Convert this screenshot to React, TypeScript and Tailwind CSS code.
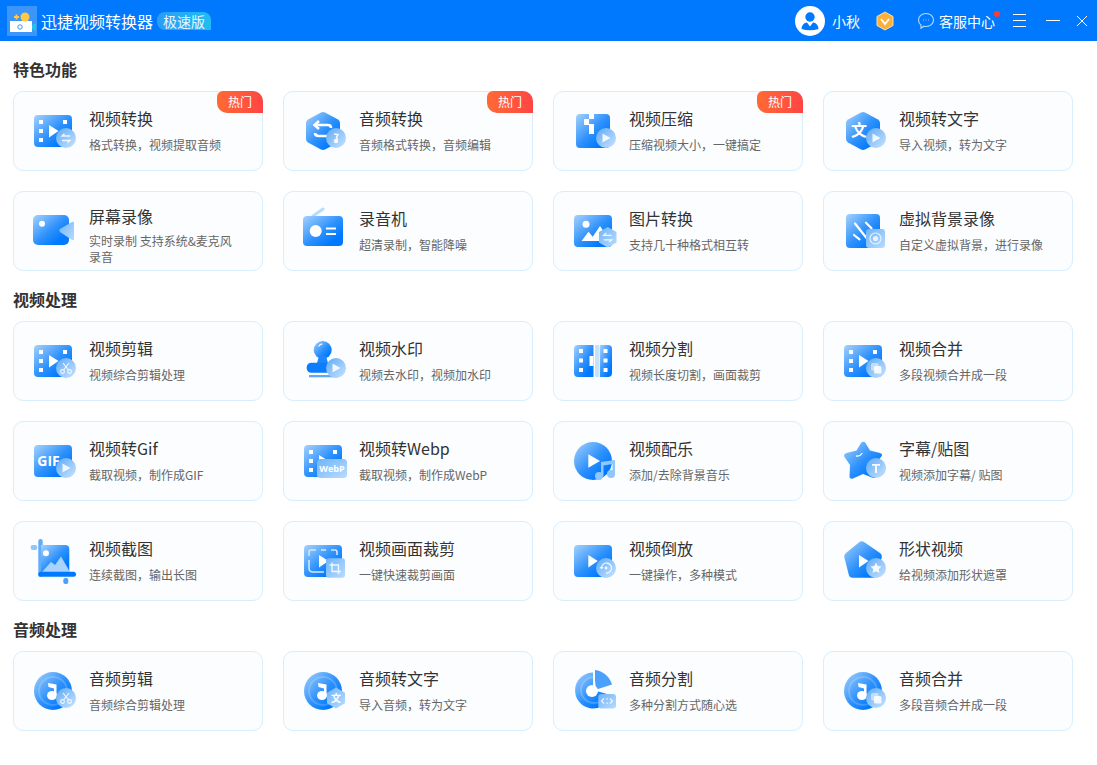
import React from "react";

const Defs = () => (
  <defs>
    <linearGradient id="m" x1="0" y1="0" x2="1" y2="1">
      <stop offset="0" stopColor="#a6d2fd" />
      <stop offset="0.5" stopColor="#2f92fc" />
      <stop offset="0.8" stopColor="#0079fe" />
      <stop offset="1" stopColor="#0079fe" />
    </linearGradient>
    <linearGradient id="b" x1="0" y1="0" x2="1" y2="1">
      <stop offset="0" stopColor="#5fa9f6" />
      <stop offset="1" stopColor="#c8e4ff" />
    </linearGradient>
    <linearGradient id="s" x1="0" y1="0" x2="1" y2="1">
      <stop offset="0" stopColor="#6fb4f8" />
      <stop offset="1" stopColor="#b9dcfe" />
    </linearGradient>
  </defs>
);

const Svg = ({ children }: { children: React.ReactNode }) => (
  <svg width="60" height="60" viewBox="0 0 60 60" className="shrink-0">
    <Defs />
    {children}
  </svg>
);

const Rect = () => <rect x="5" y="14" width="38" height="32" rx="4" fill="url(#m)" />;

const Holes = ({ right = true }: { right?: boolean }) => (
  <g fill="#fff">
    <rect x="10" y="19" width="4" height="4" />
    <rect x="10" y="28" width="4" height="4" />
    <rect x="10" y="37" width="4" height="4" />
    {right && <rect x="34" y="19" width="4" height="4" />}
  </g>
);

const Tri = ({ x = 20 }: { x?: number }) => (
  <path d={`M${x} 24 L${x + 9.5} 30 L${x} 36.5 Z`} fill="#fff" />
);

const Circle = ({ children }: { children?: React.ReactNode }) => (
  <g>
    <circle cx="37" cy="37" r="10" fill="url(#b)" />
    {children}
  </g>
);

const SquareBadge = ({ x = 27, y = 27.5, w = 19, h = 19.5, children }: any) => (
  <g>
    <rect x={x} y={y} width={w} height={h} rx="3" fill="url(#s)" />
    {children}
  </g>
);

const PlayG = () => <path d="M33.5 32.5 L41.5 37 L33.5 41.5 Z" fill="#fff" opacity="0.85" />;
const SwapG = () => (
  <g fill="none" stroke="#fff" strokeWidth="1.3" opacity="0.85">
    <path d="M33 35 H41 M35.5 32.8 L33 35 L35.5 35" />
    <path d="M41 39.5 H33 M38.5 41.7 L41 39.5 L38.5 39.5" />
  </g>
);
const NoteG = () => (
  <g fill="none" stroke="#fff" strokeWidth="1.5" opacity="0.9">
    <path d="M35 33 L39 33.5 L37.5 36 L38.5 39" />
    <circle cx="37" cy="40" r="1.5" fill="#fff" />
  </g>
);
const ScissorG = () => (
  <g fill="none" stroke="#fff" strokeWidth="1.1" opacity="0.9">
    <circle cx="33.5" cy="40.5" r="1.9" />
    <circle cx="40.5" cy="40.5" r="1.9" />
    <path d="M34.5 39 L40 32 M39.5 39 L34 32" />
  </g>
);
const CopyG = () => (
  <g>
    <rect x="32" y="32" width="7.5" height="7.5" rx="1.5" fill="#fff" opacity="0.5" />
    <rect x="35" y="35" width="7.5" height="7.5" rx="1.5" fill="#fff" opacity="0.85" />
  </g>
);

const Disc = () => (
  <g>
    <circle cx="24" cy="30" r="19" fill="url(#m)" />
    <circle cx="24" cy="30" r="14" fill="none" stroke="#fff" strokeOpacity="0.18" strokeWidth="2" />
  </g>
);
const BigNote = () => (
  <g>
    <ellipse cx="23" cy="34.5" rx="5" ry="4.6" fill="#fff" />
    <path d="M19 22 L27.5 23.5 V34 L25 35 V27.5 L19.5 26 Z" fill="#fff" />
  </g>
);

const Hex = () => (
  <path
    d="M22 11.5 Q24 10.6 26 11.5 L39 18.5 Q41 19.7 41 22 V38 Q41 40.3 39 41.5 L26 48.5 Q24 49.4 22 48.5 L9 41.5 Q7 40.3 7 38 V22 Q7 19.7 9 18.5 Z"
    fill="url(#m)"
  />
);

const icons: Record<string, React.ReactNode> = {
  convert: (
    <Svg>
      <Rect />
      <Holes />
      <Tri />
      <Circle>
        <SwapG />
      </Circle>
    </Svg>
  ),
  audio: (
    <Svg>
      <Hex />
      <g fill="none" stroke="#fff" strokeWidth="2.6">
        <path d="M16 24 H29 Q32 24 32 27" />
        <path d="M20 20 L15.5 24 L20 28" />
        <path d="M16 32 Q16 35 20 35 H30" />
      </g>
      <Circle>
        <NoteG />
      </Circle>
    </Svg>
  ),
  compress: (
    <Svg>
      <rect x="7" y="13" width="34" height="34" rx="4" fill="url(#m)" />
      <g fill="#fff">
        <rect x="20" y="13" width="5" height="5" />
        <rect x="15" y="18" width="5" height="5" />
        <rect x="20" y="23" width="5" height="5" />
        <rect x="15" y="23" width="5" height="1" />
        <rect x="20" y="28" width="5" height="5" />
      </g>
      <Circle>
        <PlayG />
      </Circle>
    </Svg>
  ),
  text: (
    <Svg>
      <Hex />
      <text x="20" y="35" textAnchor="middle" fontSize="16" fontWeight="700" fill="#fff" fontFamily="'Noto Sans CJK SC', sans-serif">
        文
      </text>
      <Circle>
        <PlayG />
      </Circle>
    </Svg>
  ),
  screen: (
    <Svg>
      <rect x="4" y="14" width="36" height="30" rx="5" fill="url(#m)" />
      <circle cx="13" cy="22.7" r="3" fill="#fff" />
      <path d="M31 28 L43 21 Q45 20 45 22 V38 Q45 40 43 39 L31 31 Q29.5 29.5 31 28 Z" fill="url(#s)" />
    </Svg>
  ),
  radio: (
    <Svg>
      <path d="M14 15 L24 8" stroke="#b9dcfe" strokeWidth="3" strokeLinecap="round" />
      <rect x="4" y="15" width="40" height="30" rx="4" fill="url(#m)" />
      <circle cx="16.7" cy="30" r="6" fill="#fff" />
      <rect x="27" y="26.5" width="10" height="2" fill="#fff" />
      <rect x="27" y="32" width="10" height="2" fill="#fff" />
    </Svg>
  ),
  image: (
    <Svg>
      <Rect />
      <circle cx="17" cy="23.3" r="3.5" fill="#fff" />
      <path d="M12.5 40 L19.5 30.7 L23.7 35.7 L31 25 L41 40 Z" fill="#fff" />
      <path d="M38.7 26 L47.5 31 V41.5 L38.7 46.5 L30 41.5 V31 Z" fill="url(#s)" />
      <g fill="none" stroke="#fff" strokeWidth="1.3" opacity="0.85" transform="translate(1.7 -0.7)">
        <path d="M33 35 H41 M35.5 32.8 L33 35 L35.5 35" />
        <path d="M41 39.5 H33 M38.5 41.7 L41 39.5 L38.5 39.5" />
      </g>
    </Svg>
  ),
  virtual: (
    <Svg>
      <rect x="7" y="13" width="34" height="34" rx="4" fill="url(#m)" />
      <g stroke="#fff" strokeWidth="2.2" strokeLinecap="round">
        <path d="M16 22.5 L27.5 37" />
        <path d="M27 21.7 L32.5 27.3" />
        <path d="M15 34 L20.5 38.3" />
      </g>
      <SquareBadge x={27} y={28} w={19} h={19}>
        <circle cx="36.5" cy="37.5" r="5.5" fill="none" stroke="#e6f3ff" strokeWidth="1.2" />
        <circle cx="36.5" cy="37.5" r="2.6" fill="#e6f3ff" />
      </SquareBadge>
    </Svg>
  ),
  edit: (
    <Svg>
      <Rect />
      <Holes />
      <Tri />
      <Circle>
        <ScissorG />
      </Circle>
    </Svg>
  ),
  stamp: (
    <Svg>
      <circle cx="23.7" cy="19" r="9" fill="url(#m)" />
      <path d="M20 25 H27 L29 32 H18 Z" fill="#1c86fd" />
      <rect x="7.7" y="31.7" width="31.6" height="10" rx="4.5" fill="#0a7efe" />
      <rect x="10" y="44" width="29" height="2.3" fill="#5daafb" />
      <path d="M20 15 Q21 13 23 13" stroke="#fff" strokeWidth="1.2" fill="none" strokeLinecap="round" />
      <Circle>
        <PlayG />
      </Circle>
    </Svg>
  ),
  split: (
    <Svg>
      <path d="M9 14 H24.5 V46 H9 Q5 46 5 42 V18 Q5 14 9 14 Z" fill="url(#m)" />
      <path d="M31 14 H39 Q43 14 43 18 V42 Q43 46 39 46 H31 Z" fill="url(#m)" />
      <rect x="26" y="14" width="4.5" height="32" rx="1" fill="#c4e1fe" />
      <rect x="20.5" y="25" width="4" height="10" fill="#fff" />
      <g fill="#fff">
        <rect x="10" y="18" width="4" height="4" />
        <rect x="10" y="27.5" width="4" height="4" />
        <rect x="10" y="37" width="4" height="4" />
        <rect x="34.5" y="18" width="4" height="4" />
        <rect x="34.5" y="27.5" width="4" height="4" />
        <rect x="34.5" y="37" width="4" height="4" />
      </g>
    </Svg>
  ),
  merge: (
    <Svg>
      <Rect />
      <Holes />
      <Tri />
      <Circle>
        <CopyG />
      </Circle>
    </Svg>
  ),
  gif: (
    <Svg>
      <Rect />
      <text x="19.5" y="34.5" textAnchor="middle" fontSize="14" fontWeight="700" fill="#fff" fontFamily="'Open Sans', sans-serif">
        GIF
      </text>
      <Circle>
        <PlayG />
      </Circle>
    </Svg>
  ),
  webp: (
    <Svg>
      <Rect />
      <Holes />
      <path d="M20 24 L29.5 30 L20 36.5 Z" fill="#fff" />
      <rect x="18" y="28" width="30" height="19" rx="3.5" fill="url(#s)" />
      <text x="33" y="41" textAnchor="middle" fontSize="9" fontWeight="700" fill="#fff" fontFamily="'Open Sans', sans-serif">
        WebP
      </text>
    </Svg>
  ),
  music: (
    <Svg>
      <circle cx="24" cy="30" r="19" fill="url(#m)" />
      <path d="M19.3 23.3 L31 30 L19.3 36.7 Z" fill="#fff" />
      <g fill="#8fc6fb">
        <path d="M32 31 L46 29 V43 H43.5 V33 L34.5 34.5 V45 H32 Z" />
        <circle cx="30" cy="45" r="4" />
        <circle cx="42" cy="43" r="4" />
      </g>
    </Svg>
  ),
  star: (
    <Svg>
      <path
        d="M22 12 Q24.5 9.5 26.5 12 L31 19.5 L41 22 Q44.5 23 42 26 L36 33.5 L37 44 Q37 48 33 46.5 L24 43 L14 47.5 Q10.5 48.5 10.5 45 L11 34 L5.5 26 Q4 23 7.5 22 L17.5 19.5 Z"
        fill="url(#m)"
      />
      <path d="M17.5 25 Q21 25.5 23 22.5" stroke="#fff" strokeWidth="1.3" fill="none" strokeLinecap="round" />
      <Circle>
        <path d="M33 33 H41 V34.8 H38 V42 H36 V34.8 H33 Z" fill="#fff" opacity="0.9" />
      </Circle>
    </Svg>
  ),
  shot: (
    <Svg>
      <rect x="9.3" y="8" width="4.4" height="38" rx="2" fill="#61acfb" />
      <path d="M12 14 H36 Q40.3 14 40.3 18 V41 H12 Z" fill="url(#m)" />
      <path d="M13 41 L22 31 L26 34 L32 25.5 L41 41 Z" fill="#a9d3fd" />
      <circle cx="17" cy="22.3" r="3" fill="#fff" />
      <rect x="9.3" y="40.7" width="37.7" height="5" rx="2.5" fill="#0079fe" />
      <rect x="1.7" y="14" width="6.6" height="5" rx="2" fill="#8fc6fb" />
      <rect x="34.3" y="47" width="5" height="6" rx="2" fill="#4aa0fb" />
    </Svg>
  ),
  crop: (
    <Svg>
      <Rect />
      <g fill="none" stroke="#cfe7ff" strokeWidth="1.6">
        <path d="M10 25 V21 Q10 19 12 19 H17" />
        <path d="M22 19 H29" strokeDasharray="5 2" />
        <path d="M32 19 H36 Q38 19 38 21 V24" />
        <path d="M10 29 V37 Q10 41 14 41 H25" />
      </g>
      <Tri x={20} />
      <SquareBadge x={27} y={27.3} w={19} h={19.4}>
        <path d="M33 31.5 V40.5 H42 M30.5 34 H39.5 V43" fill="none" stroke="#fff" strokeWidth="1.4" opacity="0.85" />
      </SquareBadge>
    </Svg>
  ),
  reverse: (
    <Svg>
      <Rect />
      <Tri x={19.3} />
      <Circle>
        <path d="M32.5 36.5 A5 5 0 1 1 37 42" fill="none" stroke="#fff" strokeWidth="1.2" opacity="0.9" />
        <path d="M30.5 36 H34.5 L32.5 38.5 Z" fill="#fff" opacity="0.9" />
        <circle cx="37" cy="37" r="1.4" fill="#fff" opacity="0.9" />
      </Circle>
    </Svg>
  ),
  shape: (
    <Svg>
      <path
        d="M20.5 11 Q22.7 9.3 25 11 L41 22 Q43.5 23.8 42.6 27 L37.6 43.5 Q36.6 46.7 33.5 46.7 L13.5 46.7 Q10.5 46.7 9.7 43.5 L5.5 27 Q4.7 23.8 7 22 Z"
        fill="url(#m)"
      />
      <Tri />
      <Circle>
        <path d="M37 31.5 L38.7 35.1 L42.5 35.6 L39.7 38.2 L40.4 42 L37 40.2 L33.6 42 L34.3 38.2 L31.5 35.6 L35.3 35.1 Z" fill="#fff" opacity="0.9" />
      </Circle>
    </Svg>
  ),
  aedit: (
    <Svg>
      <Disc />
      <BigNote />
      <Circle>
        <ScissorG />
      </Circle>
    </Svg>
  ),
  atext: (
    <Svg>
      <Disc />
      <BigNote />
      <path d="M37 26.5 L46 31.7 V42.3 L37 47.5 L28 42.3 V31.7 Z" fill="url(#s)" />
      <text x="37" y="41" textAnchor="middle" fontSize="10" fontWeight="700" fill="#fff" fontFamily="'Noto Sans CJK SC', sans-serif">
        文
      </text>
    </Svg>
  ),
  asplit: (
    <Svg>
      <path d="M24 11.5 A18 18 0 1 0 41.5 34 L24 29 Z" fill="url(#m)" />
      <circle cx="25" cy="29" r="13" fill="none" stroke="#fff" strokeOpacity="0.2" strokeWidth="2" />
      <path d="M26 9 A20 20 0 0 1 43 23.5 L26 29 Z" fill="#4ba0fb" />
      <path d="M24 29 L26 20 L27 29 Z" fill="#fff" />
      <circle cx="23" cy="30" r="6" fill="#fff" />
      <SquareBadge x={29.3} y={33} w={17.7} h={14.5}>
        <path d="M35 37.5 L32.5 40 L35 42.5 M41 37.5 L43.5 40 L41 42.5" fill="none" stroke="#fff" strokeWidth="1.2" opacity="0.85" />
        <path d="M38 37 V38.5 M38 41.5 V43" stroke="#fff" strokeWidth="1.2" opacity="0.85" />
      </SquareBadge>
    </Svg>
  ),
  amerge: (
    <Svg>
      <Disc />
      <BigNote />
      <Circle>
        <CopyG />
      </Circle>
    </Svg>
  ),
};

type Item = { i: string; t: string; d: string; hot?: boolean; wrap?: boolean };

const sections: { title: string; items: Item[] }[] = [
  {
    title: "特色功能",
    items: [
      { i: "convert", t: "视频转换", d: "格式转换，视频提取音频", hot: true },
      { i: "audio", t: "音频转换", d: "音频格式转换，音频编辑", hot: true },
      { i: "compress", t: "视频压缩", d: "压缩视频大小，一键搞定", hot: true },
      { i: "text", t: "视频转文字", d: "导入视频，转为文字" },
      { i: "screen", t: "屏幕录像", d: "实时录制 支持系统&麦克风录音", wrap: true },
      { i: "radio", t: "录音机", d: "超清录制，智能降噪" },
      { i: "image", t: "图片转换", d: "支持几十种格式相互转" },
      { i: "virtual", t: "虚拟背景录像", d: "自定义虚拟背景，进行录像" },
    ],
  },
  {
    title: "视频处理",
    items: [
      { i: "edit", t: "视频剪辑", d: "视频综合剪辑处理" },
      { i: "stamp", t: "视频水印", d: "视频去水印，视频加水印" },
      { i: "split", t: "视频分割", d: "视频长度切割，画面裁剪" },
      { i: "merge", t: "视频合并", d: "多段视频合并成一段" },
      { i: "gif", t: "视频转Gif", d: "截取视频，制作成GIF" },
      { i: "webp", t: "视频转Webp", d: "截取视频，制作成WebP" },
      { i: "music", t: "视频配乐", d: "添加/去除背景音乐" },
      { i: "star", t: "字幕/贴图", d: "视频添加字幕/ 贴图" },
      { i: "shot", t: "视频截图", d: "连续截图，输出长图" },
      { i: "crop", t: "视频画面裁剪", d: "一键快速裁剪画面" },
      { i: "reverse", t: "视频倒放", d: "一键操作，多种模式" },
      { i: "shape", t: "形状视频", d: "给视频添加形状遮罩" },
    ],
  },
  {
    title: "音频处理",
    items: [
      { i: "aedit", t: "音频剪辑", d: "音频综合剪辑处理" },
      { i: "atext", t: "音频转文字", d: "导入音频，转为文字" },
      { i: "asplit", t: "音频分割", d: "多种分割方式随心选" },
      { i: "amerge", t: "音频合并", d: "多段音频合并成一段" },
    ],
  },
];

const Card = ({ item }: { item: Item }) => (
  <div className="relative box-border flex h-20 w-[250px] items-center rounded-[10px] border border-[#d8eefd] bg-[#fbfdff] pl-[15px]">
    {icons[item.i]}
    <div className={`min-w-0 flex-1 self-start pr-6 ${item.wrap ? "pt-3" : "pt-[14px]"}`}>
      <div className="text-[16px] leading-6 text-[#333]">{item.t}</div>
      <div className={`text-[12px] leading-4 text-[#666] ${item.wrap ? "mt-[5px]" : "mt-[7px]"}`}>{item.d}</div>
    </div>
    {item.hot && (
      <div className="absolute -right-px -top-px flex h-[22px] w-[46px] items-center justify-center rounded-tl-[6px] rounded-tr-[10px] rounded-bl-[10px] bg-gradient-to-r from-[#ff6a33] to-[#ff4444] text-[12px] text-white">
        热门
      </div>
    )}
  </div>
);

export default function App() {
  return (
    <div
      className="h-[765px] w-[1097px] overflow-hidden bg-white"
      style={{ fontFamily: "'Noto Sans CJK SC', 'Liberation Sans', sans-serif" }}
    >
      <header className="flex h-[41px] items-center bg-[#0079fe] text-white">
        <svg width="30" height="30" viewBox="0 0 30 30" className="ml-[7px] shrink-0">
          <rect width="30" height="30" fill="#3c95f8" />
          <path d="M3 15 H25 V26 H3 Z" fill="#fff" />
          <path d="M25 19 L29 17 V25 L25 23 Z" fill="#21c5e0" />
          <circle cx="18" cy="11" r="4.5" fill="#ffc847" />
          <path d="M7 11 H12 M9.5 8.5 V13.5" stroke="#ffc847" strokeWidth="1.8" />
          <circle cx="13" cy="21" r="2.2" fill="none" stroke="#3c95f8" strokeWidth="1" />
        </svg>
        <span className="ml-1 text-[16px] leading-6">迅捷视频转换器</span>
        <span className="ml-1 flex h-[18px] w-[54px] items-center justify-center rounded-l-[8px] rounded-tr-[8px] bg-gradient-to-r from-[#2a9cf6] to-[#1fbdf0] text-[14px] leading-none text-[#e8f6ff]">
          极速版
        </span>
        <div className="ml-auto flex items-center">
          <svg width="30" height="30" viewBox="0 0 30 30" className="shrink-0">
            <circle cx="15" cy="15" r="15" fill="#fff" />
            <circle cx="15" cy="11" r="4.7" fill="#0079fe" />
            <path d="M6.5 23 Q7 17 12 16.5 L15 20.5 L18 16.5 Q23 17 23.5 23 Q15 25.5 6.5 23 Z" fill="#0079fe" />
          </svg>
          <span className="ml-[7px] text-[14px] leading-5">小秋</span>
          <svg width="18" height="20" viewBox="0 0 18 20" className="ml-4 shrink-0">
            <path d="M9 1 L17 5.5 V14.5 L9 19 L1 14.5 V5.5 Z" fill="#fbb03b" stroke="#ffe0a8" strokeWidth="1" />
            <path d="M5 8 L9 13 L13 8" fill="none" stroke="#fff" strokeWidth="2" />
          </svg>
          <svg width="18" height="18" viewBox="0 0 18 18" className="ml-[23px] shrink-0">
            <path
              d="M9 1.5 C13.4 1.5 16.5 4.3 16.5 8 C16.5 11.7 13.4 14.5 9 14.5 C8.2 14.5 7.5 14.4 6.8 14.2 L4 16.2 V13 C2.4 11.8 1.5 10 1.5 8 C1.5 4.3 4.6 1.5 9 1.5 Z"
              fill="none"
              stroke="#b6dafe"
              strokeWidth="1.1"
            />
            <path d="M6 8 H6.8 M8.6 8 H9.4 M11.2 8 H12" stroke="#b6dafe" strokeWidth="1.2" />
          </svg>
          <span className="relative ml-1 text-[14px] leading-5">
            客服中心
            <span className="absolute -right-[5px] top-0 h-[6px] w-[6px] rounded-full bg-[#ff3b30]" />
          </span>
          <div className="ml-[18px] flex h-[13px] w-[13px] flex-col justify-between">
            <div className="h-px bg-white" />
            <div className="h-px bg-white" />
            <div className="h-px bg-white" />
          </div>
          <div className="ml-5 h-px w-[14px] bg-white" />
          <svg width="12" height="12" viewBox="0 0 12 12" className="ml-4 mr-[9px] shrink-0">
            <path d="M1 1 L11 11 M11 1 L1 11" stroke="#fff" strokeWidth="1" />
          </svg>
        </div>
      </header>
      <main className="px-[13px]">
        {sections.map((s) => (
          <section key={s.title}>
            <h2 className="h-[50px] pt-4 text-[16px] font-bold leading-6 text-[#333]">{s.title}</h2>
            <div className="grid grid-cols-[repeat(4,250px)] gap-5">
              {s.items.map((it) => (
                <Card key={it.t} item={it} />
              ))}
            </div>
          </section>
        ))}
      </main>
    </div>
  );
}
